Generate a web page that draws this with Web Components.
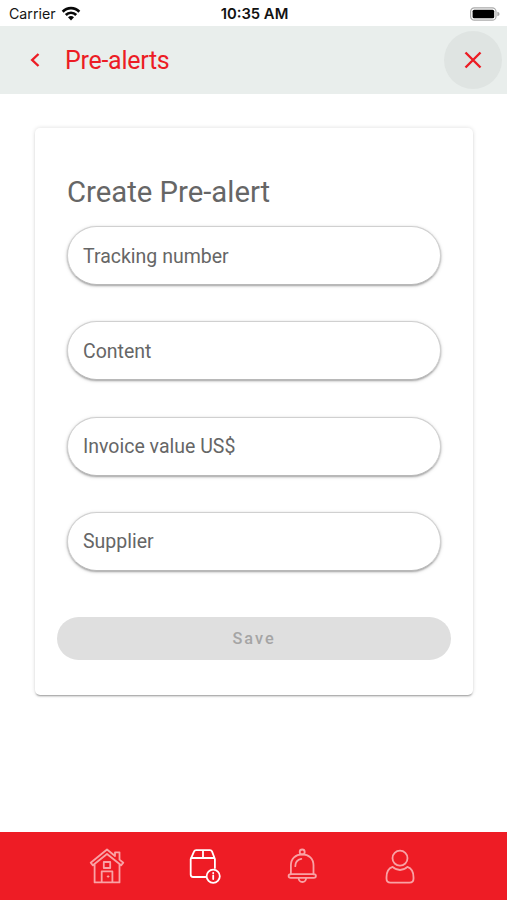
<!DOCTYPE html>
<html lang="en">
<head>
<meta charset="utf-8">
<title>Pre-alerts</title>
<style>
html, body { margin: 0; height: 100%; background: #fff; }
body { font-family: Roboto, "Liberation Sans", sans-serif; overflow: hidden; }
</style>
</head>
<body>
<alert-app></alert-app>
<script>
function define(name, html) {
  const template = document.createElement('template');
  template.innerHTML = html;
  customElements.define(name, class extends HTMLElement {
    constructor() {
      super();
      this.attachShadow({ mode: 'open' }).append(template.content.cloneNode(true));
    }
  });
}

define('status-bar', `
<style>
:host { display: grid; grid-template-columns: 1fr auto 1fr; align-items: center; height: 26px; box-sizing: border-box; padding: 1px 7px 0 9px; font: 14.2px/24px Inter, sans-serif; color: #151515; }
.left { display: flex; align-items: center; gap: 5.5px; }
.left svg { margin-top: -1px; }
.time { font-weight: 600; font-size: 14.8px; color: #111; }
.battery { justify-self: end; }
svg { display: block; }
</style>
<div class="left"><span>Carrier</span>
<svg width="20" height="15" viewBox="0 0 20 15" fill="none" stroke="#080808" stroke-width="2.7"><path d="M1.7 5.7C6.3.9 13.7.9 18.3 5.7M4.8 9C7.7 6 12.3 6 15.2 9"/><path d="M7 11.2Q10 8.7 13 11.2L10 14.4Z" fill="#080808" stroke="none"/></svg></div>
<span class="time">10:35 AM</span>
<svg class="battery" width="31" height="14" viewBox="0 0 31 14"><rect x="1.6" y=".8" width="25.4" height="12.4" rx="3.8" fill="#fff" stroke="#aaa" stroke-width="1.2"/><rect x="3.6" y="2.7" width="21.6" height="8.6" rx="1.6" fill="#000"/><path d="M28.3 4.8Q30.6 5.2 30.6 7Q30.6 8.8 28.3 9.2Z" fill="#aaa"/></svg>
`);

define('title-bar', `
<style>
:host { display: flex; align-items: center; height: 68px; box-sizing: border-box; padding: 0 5px 0 29px; background: #e9eeec; color: #ec1c24; }
svg { display: block; fill: none; stroke: currentColor; stroke-width: 2.4; }
h1 { flex: 1; margin: 2px 0 0 24px; font-size: 25px; letter-spacing: -.28px; line-height: 30px; font-weight: 400; }
.close { display: grid; place-items: center; width: 58px; height: 58px; border-radius: 50%; background: #dfe4e2; }
</style>
<svg width="12" height="16" viewBox="0 0 12 16"><path d="M9.5 2L3.2 8L9.5 14"/></svg>
<h1><slot></slot></h1>
<div class="close"><svg width="18" height="18" viewBox="0 0 18 18"><path d="M1.5 1.5L16.5 16.5M16.5 1.5L1.5 16.5"/></svg></div>
`);

define('pill-field', `
<style>
:host { display: flex; align-items: center; height: 59px; box-sizing: border-box; padding: 2px 15px 0; border-radius: 30px; background: #fff; border: 1px solid #d0d0d0; border-bottom-color: #b8b8b8; box-shadow: 0 1px 2px rgba(0,0,0,.3), 0 1px 4px rgba(0,0,0,.12); font-size: 19.5px; line-height: 24px; color: #666; }
</style><slot></slot>
`);

define('save-button', `
<style>
:host { display: block; }
button { display: block; width: 100%; height: 43px; border: 0; padding: 0; border-radius: 22px; background: #dfdfdf; color: #a5a5a5; font: 500 16.3px/20px Roboto, sans-serif; letter-spacing: 2px; }
</style><button disabled><slot></slot></button>
`);

define('form-card', `
<style>
:host { display: block; box-sizing: border-box; margin: 34px 34px 0 35px; height: 567px; padding: 46px 22px 0; border-radius: 5px; background: #fff; box-shadow: 0 2px 2px -1px rgba(0,0,0,.36), 0 0 4px rgba(0,0,0,.14); }
h2 { margin: 0 10px 16px; font-size: 29.3px; line-height: 36px; font-weight: 400; color: #666; }
.fields { display: grid; gap: 36.3px; margin: 0 10px 46.2px 10px; }
</style>
<h2><slot name="title"></slot></h2>
<div class="fields"><slot></slot></div>
<slot name="action"></slot>
`);

define('tab-bar', `
<style>
:host { display: grid; grid-template-columns: repeat(4, 1fr); place-items: center; height: 68px; box-sizing: border-box; padding: 0 58px; background: #ee1c25; color: #f9a2a5; }
svg { display: block; fill: none; stroke: currentColor; stroke-width: 1.8; stroke-linejoin: round; stroke-linecap: round; }
.active { color: #fff; }
</style>
<svg width="40" height="40" viewBox="0 0 40 40"><path d="M20 3.5L3.7 16.7L5.9 19.3L20 8L34.1 19.3L36.3 16.7L32.5 13.6V6.3H28V10ZM7.6 18V36.4H32.5V18M14.7 36.4V25.4H25.4V36.4M16.8 16H23.2V22H16.8Z"/><path stroke-width="1" d="M20.2 30.5H22M21.1 29.6V31.4"/></svg>
<svg class="active" width="40" height="40" viewBox="0 0 40 40"><path d="M20.5 31H8.2Q5.7 31 5.7 28.5V13.2L9.1 5.4Q9.6 4.1 11.1 4.1H25Q26.5 4.1 27 5.4L29.9 13V22M6 12H29.5M18 4.4V12"/><circle cx="28.2" cy="30.2" r="6.6"/><path d="M28.2 29.4V33M28.2 26.8V27.2"/></svg>
<svg width="40" height="40" viewBox="0 0 40 40"><circle cx="20.2" cy="6" r="2.5"/><path d="M8.9 28.3V19.3C8.9 12.6 13.5 8.3 20.2 8.3S31.5 12.6 31.5 19.3V28.3M8.8 28.2H31.7Q33.9 28.2 33.9 30T31.7 31.8H8.8Q6.6 31.8 6.6 30T8.8 28.2ZM16.5 32Q17 36 20.4 36T24.2 32M13.3 20.2C13.3 16 15.5 13.7 19.3 12.9"/></svg>
<svg width="40" height="40" viewBox="0 0 40 40"><circle cx="20" cy="12.2" r="7.5"/><path d="M12.6 20.9C8.6 22.3 6.5 26 6.5 31.2V32.8Q6.5 36.6 10.5 36.6H29.5Q33.5 36.6 33.5 32.8V31.2C33.5 26 31.4 22.3 27.4 20.9C23 25 17 25 12.6 20.9Z"/></svg>
`);

define('alert-app', `
<style>
:host { display: flex; flex-direction: column; height: 900px; }
main { flex: 1; }
</style>
<status-bar></status-bar>
<title-bar>Pre-alerts</title-bar>
<main><form-card>
<span slot="title">Create Pre-alert</span>
<pill-field>Tracking number</pill-field>
<pill-field>Content</pill-field>
<pill-field>Invoice value US$</pill-field>
<pill-field>Supplier</pill-field>
<save-button slot="action">Save</save-button>
</form-card></main>
<tab-bar></tab-bar>
`);
</script>
</body>
</html>
